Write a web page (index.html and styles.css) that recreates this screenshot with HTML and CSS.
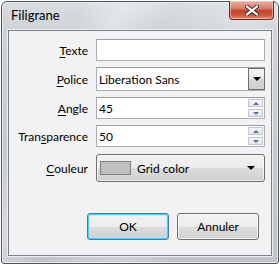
FILE: index.html
```html
<!DOCTYPE html>
<html lang="fr">
<head>
  <meta charset="UTF-8" />
  <title>Filigrane</title>
  <link rel="stylesheet" href="styles.css">
</head>
<body>
  <div class="window">
    <div class="titlebar">
      <span class="title">Filigrane</span>
      <div class="close" aria-label="Fermer">
        <svg width="14" height="11" viewBox="0 0 14 11">
          <path d="M2 1.5 L12 9.5 M12 1.5 L2 9.5" stroke="#3a2a26" stroke-width="4" stroke-linecap="square" fill="none"/>
          <path d="M2 1.5 L12 9.5 M12 1.5 L2 9.5" stroke="#fff" stroke-width="2.2" stroke-linecap="square" fill="none"/>
        </svg>
      </div>
    </div>

    <div class="client">
      <div class="form">
        <div class="row row-texte">
          <label class="label"><u>T</u>exte</label>
          <div class="field"></div>
        </div>
        <div class="row row-police">
          <label class="label"><u>P</u>olice</label>
          <div class="field combo">
            <span class="value">Liberation Sans</span>
            <span class="drop"><i class="tri"></i></span>
          </div>
        </div>
        <div class="row row-angle">
          <label class="label"><u>A</u>ngle</label>
          <div class="field spin">
            <span class="value">45</span>
            <span class="spin-btns">
              <span class="spin-btn"><i class="tri-up"></i></span>
              <span class="spin-btn"><i class="tri-down"></i></span>
            </span>
          </div>
        </div>
        <div class="row row-trans">
          <label class="label">Tran<u>s</u>parence</label>
          <div class="field spin">
            <span class="value">50</span>
            <span class="spin-btns">
              <span class="spin-btn"><i class="tri-up"></i></span>
              <span class="spin-btn"><i class="tri-down"></i></span>
            </span>
          </div>
        </div>
        <div class="row row-color">
          <label class="label"><u>C</u>ouleur</label>
          <div class="color-btn">
            <span class="swatch"></span>
            <span class="value">Grid color</span>
            <i class="tri"></i>
          </div>
        </div>
      </div>

      <div class="buttons">
        <button class="btn btn-default">OK</button>
        <button class="btn">Annuler</button>
      </div>
    </div>
  </div>
</body>
</html>
```

FILE: styles.css
```css
body {
  margin: 0;
  background: #fff;
  font-family: Lato, "Open Sans", sans-serif;
  font-size: 12px;
  color: #000;
}

.window {
  position: relative;
  box-sizing: border-box;
  width: 278px;
  height: 263px;
  margin: 1px 0 0 1px;
  border: 1px solid #50555b;
  border-radius: 6px 6px 3px 3px;
  padding: 0 6px 7px 6px;
  display: flex;
  flex-direction: column;
  background:
    linear-gradient(118deg, rgba(255,255,255,0) 20%, rgba(255,255,255,0.35) 30%, rgba(255,255,255,0) 42%, rgba(255,255,255,0.25) 62%, rgba(255,255,255,0) 75%),
    linear-gradient(to bottom, #dadee3 0, #ccd1d6 30px, #bfc4c9 100%);
  box-shadow: inset 0 0 0 1px #e9ecef;
}

.titlebar {
  height: 28px;
  display: flex;
  align-items: center;
  flex-shrink: 0;
}

.title {
  margin-left: 3px;
  margin-top: -3px;
  font-size: 13px;
  color: #000;
}

.close {
  position: absolute;
  top: -1px;
  right: 4px;
  width: 45px;
  height: 19px;
  box-sizing: border-box;
  border: 1px solid #6b2a1e;
  border-top: none;
  border-radius: 0 0 4px 4px;
  background: linear-gradient(to bottom, #eab1a2 0, #d8806b 40%, #c2412a 55%, #cf5a40 80%, #e48e72 100%);
  box-shadow: inset 0 0 0 1px rgba(255,220,210,0.5);
  display: flex;
  align-items: center;
  justify-content: center;
}

.client {
  flex: 1;
  box-sizing: border-box;
  border: 1px solid #7b8086;
  background: #f2f1f4;
  display: flex;
  flex-direction: column;
  box-shadow: 0 0 0 1px #eceef0;
}

.form {
  display: flex;
  flex-direction: column;
  padding-top: 8px;
}

.row {
  display: flex;
  align-items: center;
}

.row-texte { height: 22px; margin-bottom: 6px; }
.row-police { height: 24px; margin-bottom: 6px; }
.row-angle { height: 22px; margin-bottom: 6px; }
.row-trans { height: 22px; margin-bottom: 7px; }
.row-color { height: 28px; }

.label {
  width: 79px;
  text-align: right;
  margin-right: 8px;
  white-space: nowrap;
}

.label u {
  text-underline-offset: 2px;
}

.field {
  box-sizing: border-box;
  width: 169px;
  height: 100%;
  background: #fff;
  border: 1px solid #abadb3;
  border-top-color: #9a9ca3;
  display: flex;
  align-items: center;
  position: relative;
}

.value {
  padding-left: 2px;
  flex: 1;
}

.combo .drop {
  position: absolute;
  right: -1px;
  top: 0;
  bottom: 0;
  width: 17px;
  box-sizing: border-box;
  border: 1px solid #6f6f6f;
  background: linear-gradient(to bottom, #f4f4f4 0, #e8e8e8 50%, #d6d6d6 51%, #cfcfcf 100%);
  display: flex;
  align-items: center;
  justify-content: center;
}

.tri {
  width: 0;
  height: 0;
  border-left: 4px solid transparent;
  border-right: 4px solid transparent;
  border-top: 4px solid #000;
}

.spin-btns {
  display: flex;
  flex-direction: column;
  gap: 2px;
  margin-right: 1px;
}

.spin-btn {
  box-sizing: border-box;
  width: 15px;
  height: 8px;
  border: 1px solid #c3c6cc;
  background: linear-gradient(to bottom, #f6f7f9, #e4e6ea);
  display: flex;
  align-items: center;
  justify-content: center;
}

.tri-up {
  width: 0;
  height: 0;
  border-left: 3px solid transparent;
  border-right: 3px solid transparent;
  border-bottom: 3px solid #4b6db3;
}

.tri-down {
  width: 0;
  height: 0;
  border-left: 3px solid transparent;
  border-right: 3px solid transparent;
  border-top: 3px solid #4b6db3;
}

.color-btn {
  box-sizing: border-box;
  width: 169px;
  height: 100%;
  border: 1px solid #707070;
  border-radius: 3px;
  background: linear-gradient(to bottom, #f2f2f2 0, #ebebeb 50%, #dddddd 51%, #cfcfcf 100%);
  box-shadow: inset 0 0 0 1px rgba(255,255,255,0.7);
  display: flex;
  align-items: center;
  padding: 0 9px 0 3px;
}

.swatch {
  box-sizing: border-box;
  width: 31px;
  height: 14px;
  background: #c0c0c0;
  border: 1px solid #808080;
  margin-right: 4px;
}

.buttons {
  display: flex;
  justify-content: flex-end;
  gap: 8px;
  margin-top: 31px;
  padding-right: 12px;
}

.btn {
  box-sizing: border-box;
  width: 82px;
  height: 27px;
  font-family: inherit;
  font-size: 12px;
  color: #000;
  border: 1px solid #707070;
  border-radius: 3px;
  background: linear-gradient(to bottom, #f2f2f2 0, #ebebeb 50%, #dddddd 51%, #cfcfcf 100%);
  box-shadow: inset 0 0 0 1px rgba(255,255,255,0.7);
  padding: 0;
}

.btn-default {
  border-color: #3c7fb1;
  box-shadow: inset 0 0 0 1px #48d3f8, inset 0 0 0 2px rgba(170,230,250,0.6);
}
```
